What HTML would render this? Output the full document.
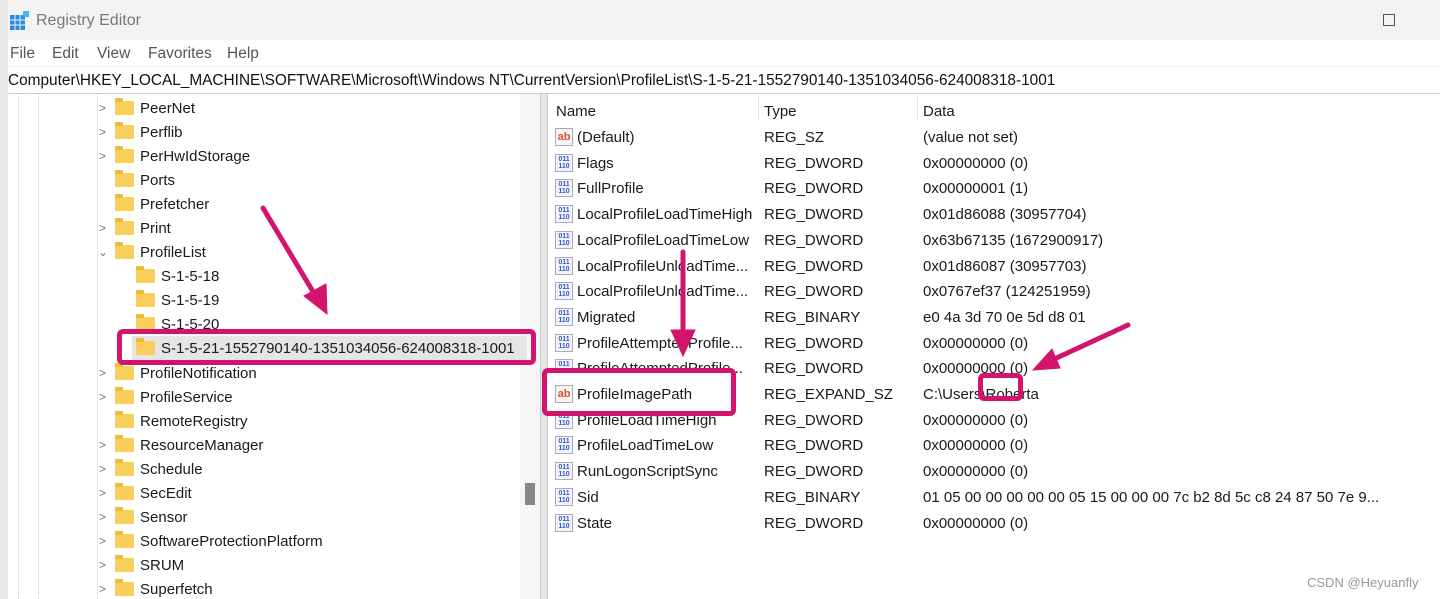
<!DOCTYPE html>
<html><head><meta charset="utf-8"><style>
*{margin:0;padding:0;box-sizing:border-box}
body{width:1440px;height:599px;overflow:hidden;background:#fff;font-family:"Liberation Sans",sans-serif;color:#1a1a1a;position:relative}
.a{position:absolute;white-space:nowrap}
.t{font-size:15px;margin-top:2px}
.m{position:absolute;top:45px;font-size:15.5px;color:#555}
.fold{position:absolute;width:19px;height:14px;background:#f8cf5a;border-radius:1px}
.fold:before{content:"";position:absolute;left:0;top:-3px;width:8px;height:4px;background:#f0b93a;border-radius:1px 1px 0 0}
.chev{position:absolute;font-size:12px;color:#777;margin-top:2px}
.ic{position:absolute;width:18px;height:18px;border:1px solid #aab;background:#f4f4f8;font-size:7px;font-weight:bold;line-height:7px;text-align:center;color:#2a5bd0;padding-top:1px}
.ab{color:#e0502a;font-size:11px;line-height:14px}
.box{position:absolute;border:5px solid #d2146e;border-radius:6px}
</style></head><body>
<div class="a" style="left:0;top:0;width:1440px;height:40px;background:#f3f3f3"></div>
<div class="a" style="left:0;top:0;width:8px;height:599px;background:#e8e8e8"></div>
<svg class="a" style="left:10px;top:11px" width="20" height="20"><rect x="0" y="4" width="15" height="15" fill="#2b8be0"/><g stroke="#f3f3f3" stroke-width="1"><line x1="5" y1="4" x2="5" y2="19"/><line x1="10" y1="4" x2="10" y2="19"/><line x1="0" y1="9" x2="15" y2="9"/><line x1="0" y1="14" x2="15" y2="14"/></g><rect x="13" y="0" width="6" height="6" fill="#4fb0f0"/></svg>
<div class="a" style="left:36px;top:12px;font-size:16px;color:#777">Registry Editor</div>
<div class="a" style="left:1383px;top:14px;width:12px;height:12px;border:1px solid #555"></div>
<div class="a" style="left:8px;top:40px;width:1432px;height:26px;background:#fff"></div>
<div class="m" style="left:10px">File</div><div class="m" style="left:52px">Edit</div><div class="m" style="left:97px">View</div><div class="m" style="left:148px">Favorites</div><div class="m" style="left:227px">Help</div>
<div class="a" style="left:8px;top:66px;width:1432px;height:28px;background:#fff;border-top:1px solid #eee;border-bottom:1px solid #ccc"></div>
<div class="a" style="left:8px;top:72px;font-size:15.4px;color:#111">Computer\HKEY_LOCAL_MACHINE\SOFTWARE\Microsoft\Windows NT\CurrentVersion\ProfileList\S-1-5-21-1552790140-1351034056-624008318-1001</div>
<!-- tree -->
<div class="a" style="left:18px;top:94px;width:1px;height:505px;border-left:1px dotted #ccc"></div>
<div class="a" style="left:38px;top:94px;width:1px;height:505px;border-left:1px dotted #ccc"></div>
<div class="a" style="left:97px;top:94px;width:1px;height:505px;border-left:1px dotted #ccc"></div>
<div class="a" style="left:520px;top:94px;width:20px;height:505px;background:#f6f6f6"></div>
<div class="a" style="left:525px;top:483px;width:10px;height:22px;background:#888"></div>
<div class="a" style="left:540px;top:94px;width:8px;height:505px;background:#e6e6e6;border-left:1px solid #ccc;border-right:1px solid #ccc"></div>

<div class="chev" style="left:99px;top:99px">&gt;</div><div class="fold" style="left:115px;top:101px"></div><div class="a t" style="left:140px;top:98px">PeerNet</div>
<div class="chev" style="left:99px;top:123px">&gt;</div><div class="fold" style="left:115px;top:125px"></div><div class="a t" style="left:140px;top:122px">Perflib</div>
<div class="chev" style="left:99px;top:147px">&gt;</div><div class="fold" style="left:115px;top:149px"></div><div class="a t" style="left:140px;top:146px">PerHwIdStorage</div>
<div class="fold" style="left:115px;top:173px"></div><div class="a t" style="left:140px;top:170px">Ports</div>
<div class="fold" style="left:115px;top:197px"></div><div class="a t" style="left:140px;top:194px">Prefetcher</div>
<div class="chev" style="left:99px;top:219px">&gt;</div><div class="fold" style="left:115px;top:221px"></div><div class="a t" style="left:140px;top:218px">Print</div>
<div class="chev" style="left:98px;top:243px">&#8964;</div><div class="fold" style="left:115px;top:245px"></div><div class="a t" style="left:140px;top:242px">ProfileList</div>
<div class="fold" style="left:136px;top:269px"></div><div class="a t" style="left:161px;top:266px">S-1-5-18</div>
<div class="fold" style="left:136px;top:293px"></div><div class="a t" style="left:161px;top:290px">S-1-5-19</div>
<div class="fold" style="left:136px;top:317px"></div><div class="a t" style="left:161px;top:314px">S-1-5-20</div>
<div class="a" style="left:132px;top:336px;width:395px;height:24px;background:#e5e5e5"></div>
<div class="fold" style="left:136px;top:341px"></div><div class="a t" style="left:161px;top:338px">S-1-5-21-1552790140-1351034056-624008318-1001</div>
<div class="chev" style="left:99px;top:364px">&gt;</div><div class="fold" style="left:115px;top:366px"></div><div class="a t" style="left:140px;top:363px">ProfileNotification</div>
<div class="chev" style="left:99px;top:388px">&gt;</div><div class="fold" style="left:115px;top:390px"></div><div class="a t" style="left:140px;top:387px">ProfileService</div>
<div class="fold" style="left:115px;top:414px"></div><div class="a t" style="left:140px;top:411px">RemoteRegistry</div>
<div class="chev" style="left:99px;top:436px">&gt;</div><div class="fold" style="left:115px;top:438px"></div><div class="a t" style="left:140px;top:435px">ResourceManager</div>
<div class="chev" style="left:99px;top:460px">&gt;</div><div class="fold" style="left:115px;top:462px"></div><div class="a t" style="left:140px;top:459px">Schedule</div>
<div class="chev" style="left:99px;top:484px">&gt;</div><div class="fold" style="left:115px;top:486px"></div><div class="a t" style="left:140px;top:483px">SecEdit</div>
<div class="chev" style="left:99px;top:508px">&gt;</div><div class="fold" style="left:115px;top:510px"></div><div class="a t" style="left:140px;top:507px">Sensor</div>
<div class="chev" style="left:99px;top:532px">&gt;</div><div class="fold" style="left:115px;top:534px"></div><div class="a t" style="left:140px;top:531px">SoftwareProtectionPlatform</div>
<div class="chev" style="left:99px;top:556px">&gt;</div><div class="fold" style="left:115px;top:558px"></div><div class="a t" style="left:140px;top:555px">SRUM</div>
<div class="chev" style="left:99px;top:580px">&gt;</div><div class="fold" style="left:115px;top:582px"></div><div class="a t" style="left:140px;top:579px">Superfetch</div>
<!-- right pane -->
<div class="a" style="left:758px;top:96px;width:1px;height:24px;background:#e5e5e5"></div>
<div class="a" style="left:917px;top:96px;width:1px;height:24px;background:#e5e5e5"></div>
<div class="a t" style="left:556px;top:101px">Name</div><div class="a t" style="left:764px;top:101px">Type</div><div class="a t" style="left:923px;top:101px">Data</div>
<div id="rows"></div>
<script>
var R=[["ab","(Default)","REG_SZ","(value not set)"],["b","Flags","REG_DWORD","0x00000000 (0)"],["b","FullProfile","REG_DWORD","0x00000001 (1)"],["b","LocalProfileLoadTimeHigh","REG_DWORD","0x01d86088 (30957704)"],["b","LocalProfileLoadTimeLow","REG_DWORD","0x63b67135 (1672900917)"],["b","LocalProfileUnloadTime...","REG_DWORD","0x01d86087 (30957703)"],["b","LocalProfileUnloadTime...","REG_DWORD","0x0767ef37 (124251959)"],["b","Migrated","REG_BINARY","e0 4a 3d 70 0e 5d d8 01"],["b","ProfileAttemptedProfile...","REG_DWORD","0x00000000 (0)"],["b","ProfileAttemptedProfile...","REG_DWORD","0x00000000 (0)"],["ab","ProfileImagePath","REG_EXPAND_SZ","C:\\Users\\Roberta"],["b","ProfileLoadTimeHigh","REG_DWORD","0x00000000 (0)"],["b","ProfileLoadTimeLow","REG_DWORD","0x00000000 (0)"],["b","RunLogonScriptSync","REG_DWORD","0x00000000 (0)"],["b","Sid","REG_BINARY","01 05 00 00 00 00 00 05 15 00 00 00 7c b2 8d 5c c8 24 87 50 7e 9..."],["b","State","REG_DWORD","0x00000000 (0)"]];
var h="";R.forEach(function(r,i){var y=127+i*25.7;
h+='<div class="ic '+(r[0]=="ab"?'ab':'')+'" style="left:555px;top:'+(y+1)+'px">'+(r[0]=="ab"?'ab':'011<br>110')+'</div>';
h+='<div class="a t" style="left:577px;top:'+y+'px">'+r[1]+'</div><div class="a t" style="left:764px;top:'+y+'px">'+r[2]+'</div><div class="a t" style="left:923px;top:'+y+'px">'+r[3]+'</div>';});
document.getElementById("rows").innerHTML=h;
</script>
<!-- annotations -->
<div class="box" style="left:117px;top:329px;width:419px;height:36px"></div>
<div class="box" style="left:542px;top:368px;width:194px;height:48px;background:#fff"></div>
<div class="ic ab" style="left:555px;top:385px">ab</div><div class="a t" style="left:577px;top:384px">ProfileImagePath</div>
<div class="box" style="left:978px;top:373px;width:45px;height:28px"></div>
<svg class="a" style="left:0;top:0" width="1440" height="599"><g stroke="#d2146e" stroke-width="5" fill="#d2146e" stroke-linecap="round">
<line x1="263" y1="208" x2="318" y2="300"/><polygon points="327,314 304,296 326,284" stroke-width="1"/>
<line x1="683" y1="252" x2="683" y2="335"/><polygon points="683,356 671,330 695,330" stroke-width="1"/>
<line x1="1128" y1="325" x2="1050" y2="361"/><polygon points="1033,370 1052,349 1060,368" stroke-width="1"/>
</g></svg>
<div class="a" style="left:1307px;top:575px;font-size:13px;color:#999">CSDN @Heyuanfly</div>
</body></html>
